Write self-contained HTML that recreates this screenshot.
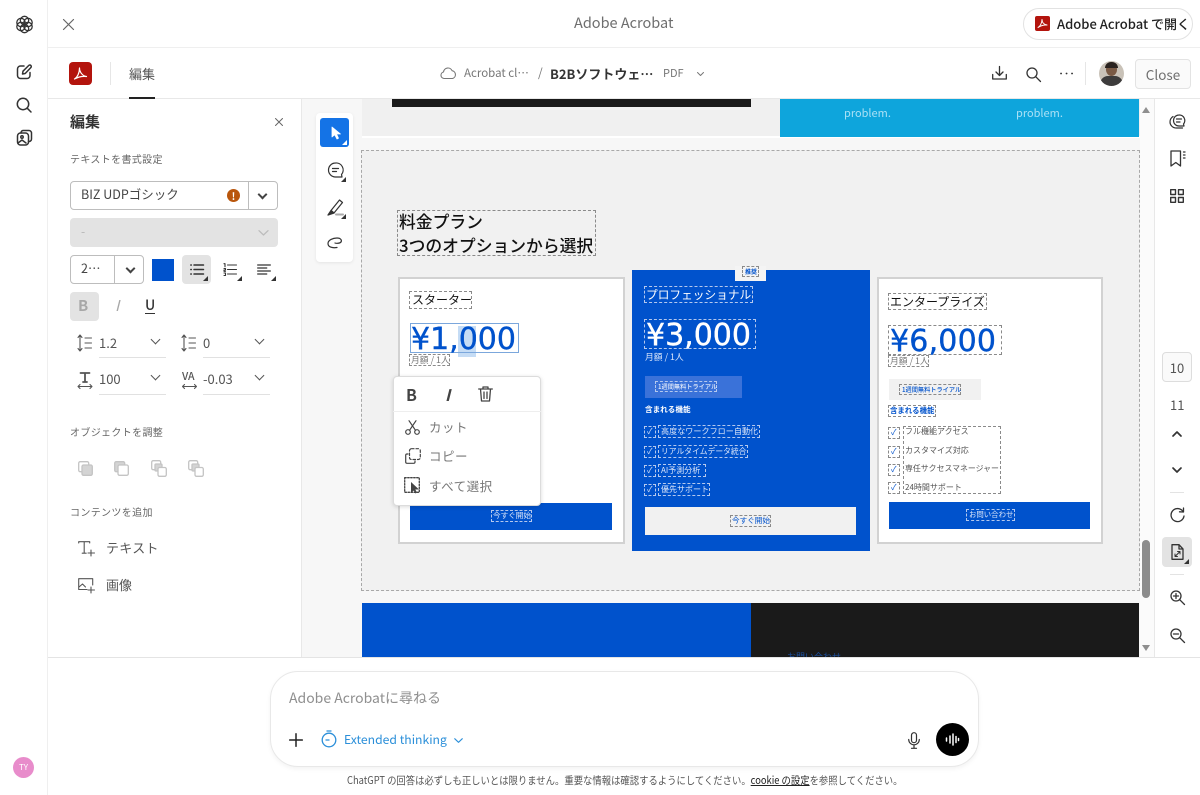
<!DOCTYPE html>
<html lang="ja"><head><meta charset="utf-8"><title>Adobe Acrobat</title>
<style>
*{box-sizing:border-box}
html,body{margin:0;padding:0;width:1200px;height:795px;overflow:hidden;background:#fff;font-family:"Noto Sans CJK JP","Liberation Sans",sans-serif;color:#2c2c2c}
.a{position:absolute}
.t{position:absolute;white-space:nowrap;line-height:1}
.d{position:absolute;border:1px dashed #8a8a8a;white-space:nowrap;line-height:1}
.dw{border-color:#b4c8ee}
.p{font-family:"DejaVu Sans","Liberation Sans",sans-serif;font-size:30px;-webkit-text-stroke:.4px currentColor}
svg{position:absolute;overflow:visible;stroke-linecap:round;stroke-linejoin:round}
svg:not([fill]){fill:none}
svg:not([stroke]){stroke:#333}
svg:not([stroke-width]){stroke-width:1.5}
.tri{position:absolute;width:0;height:0;border-left:5px solid transparent;border-bottom:5px solid #333}
.sel{position:absolute;border:1px solid #bdbdbd;border-radius:4px;background:#fff}
.ul{position:absolute;height:1px;background:#e1e1e1}
.chev{position:absolute;width:7px;height:7px;border-right:2px solid #444;border-bottom:2px solid #444;transform:rotate(45deg)}
</style></head><body>

<!-- rail -->
<div class="a" style="left:47px;top:0;width:1px;height:795px;background:#efefef"></div>
<svg style="left:14px;top:14px" width="21" height="21" viewBox="0 0 21 21" stroke-width="1.3"><circle cx="10.5" cy="6.5" r="4.2"/><circle cx="14" cy="8.500" r="4.2"/><circle cx="14" cy="12.500" r="4.2"/><circle cx="10.5" cy="14.500" r="4.2"/><circle cx="7" cy="12.500" r="4.2"/><circle cx="7" cy="8.500" r="4.2"/></svg>
<svg style="left:16px;top:64px" width="17" height="16" viewBox="0 0 17 16"><path d="M8 2H4.500A3 3 0 0 0 1.500 5v6.500a3 3 0 0 0 3 3H11a3 3 0 0 0 3-3V8.500"/><path d="M6.500 10l.5-2.800L12.700 1.500a1.400 1.400 0 0 1 2.200 2L9.200 9.500z"/></svg>
<svg style="left:16px;top:97px" width="16" height="16" viewBox="0 0 16 16"><circle cx="7" cy="7" r="5.700"/><path d="M11.200 11.200L15 15"/></svg>
<svg style="left:16px;top:129px" width="17" height="17" viewBox="0 0 17 17"><rect x="1.500" y="4" width="11" height="12" rx="3"/><path d="M5 4V3.500a2.500 2.500 0 0 1 2.500-2H13a2.500 2.500 0 0 1 2.500 2.500v6a2.500 2.500 0 0 1-3 2.500"/><circle cx="6" cy="8" r="1.200"/><path d="M2 14l4-3 4 3"/></svg>
<div class="a" style="left:13px;top:757px;width:21px;height:21px;border-radius:50%;background:#e88ccb;color:#fff;font-size:8px;line-height:21px;text-align:center">TY</div>

<!-- header -->
<div class="a" style="left:48px;top:47px;width:1152px;height:1px;background:#efefef"></div>
<svg style="left:63px;top:19px" width="11" height="11" viewBox="0 0 11 11" stroke="#666" stroke-width="1.200"><path d="M.5.500l10 10M10.500.500l-10 10"/></svg>
<div class="t" style="left:574px;top:16px;font-size:14.500px;color:#6e6e6e">Adobe Acrobat</div>
<div class="a" style="left:1023px;top:8px;width:170px;height:32px;border:1px solid #e2e2e2;border-radius:16px"></div>
<div class="a" style="left:1035px;top:16px;width:15px;height:15px;border-radius:2px;background:#b3140d"></div>
<svg style="left:1037px;top:18px" width="11" height="11" viewBox="0 0 11 11" stroke="#fff" stroke-width="1"><path d="M1 9.500C3 8.500 5 5 5 1.500c0 3 2 5 5 5.500-3-.3-6 .5-9 2.500z"/></svg>
<div class="t" style="left:1057px;top:17px;font-size:13px;font-weight:500;color:#222">Adobe Acrobat で開く</div>

<!-- toolbar -->
<div class="a" style="left:48px;top:98px;width:1152px;height:1px;background:#e8e8e8"></div>
<div class="a" style="left:69px;top:62px;width:23px;height:23px;border-radius:4px;background:#b3140d"></div>
<svg style="left:73px;top:66px" width="15" height="15" viewBox="0 0 15 15" stroke="#fff" stroke-width="1.200"><path d="M1.500 13c2.500-1.500 5-5.500 5-11 0 4 3 8 7 8.500-4-.5-8 .3-12 2.500z"/></svg>
<div class="a" style="left:110px;top:62px;width:1px;height:23px;background:#e6e6e6"></div>
<div class="t" style="left:129px;top:67px;font-size:13px;color:#555">編集</div>
<div class="a" style="left:129px;top:97px;width:26px;height:2px;background:#222"></div>
<svg style="left:440px;top:66px" width="17" height="13" viewBox="0 0 17 13" stroke="#777" stroke-width="1.100"><path d="M4 12.500a3.300 3.300 0 0 1-.5-6.500 4.500 4.500 0 0 1 8.600-1.300A4 4 0 0 1 12.500 12.500z"/></svg>
<div class="t" style="left:464px;top:68px;font-size:11.500px;color:#777">Acrobat cl⋯</div>
<div class="t" style="left:538px;top:67px;font-size:12px;color:#777">/</div>
<div class="t" style="left:550px;top:67px;font-size:13px;font-weight:700;color:#333">B2Bソフトウェ⋯</div>
<div class="t" style="left:663px;top:68px;font-size:11px;color:#777">PDF</div>
<svg style="left:697px;top:72px" width="7" height="4" viewBox="0 0 7 4" stroke="#777" stroke-width="1"><path d="M.5.500L3.500 3.500 6.500.500"/></svg>
<svg style="left:992px;top:66px" width="15" height="14" viewBox="0 0 15 14" stroke-width="1.300"><path d="M7.500.500v8.500M4 6l3.500 3.500L11 6M.700 8.500v4.500h13.600V8.500"/></svg>
<svg style="left:1026px;top:67px" width="15" height="15" viewBox="0 0 15 15" stroke-width="1.300"><circle cx="6" cy="6" r="5"/><path d="M9.700 9.700L14.500 14.500"/></svg>
<svg style="left:1060px;top:72px" width="13" height="3" viewBox="0 0 13 3" stroke-width="1.800"><path d="M1 1.500h.1M6.500 1.500h.1M12 1.500h.1"/></svg>
<div class="a" style="left:1085px;top:62px;width:1px;height:23px;background:#e6e6e6"></div>
<div class="a" style="left:1099px;top:61px;width:25px;height:25px;border-radius:50%;overflow:hidden;background:#c9c2b8">
<div class="a" style="left:7px;top:2px;width:11px;height:13px;border-radius:50%;background:#7a5a45"></div>
<div class="a" style="left:6px;top:1px;width:13px;height:6px;border-radius:6px 6px 0 0;background:#2a2320"></div>
<div class="a" style="left:1px;top:15px;width:23px;height:12px;border-radius:8px 8px 0 0;background:#3d3c3c"></div></div>
<div class="a" style="left:1135px;top:59px;width:56px;height:30px;border:1px solid #e3e3e3;border-radius:4px;background:#fafafa;color:#6e6e6e;font-size:13.500px;line-height:28px;text-align:center">Close</div>

<!-- left panel -->
<div class="a" style="left:301px;top:99px;width:1px;height:558px;background:#e8e8e8"></div>
<div class="t" style="left:70px;top:114px;font-size:15px;font-weight:700;color:#333">編集</div>
<svg style="left:275px;top:118px" width="8" height="8" viewBox="0 0 8 8" stroke="#666" stroke-width="1"><path d="M.5.500l7 7M7.500.500l-7 7"/></svg>
<div class="t" style="left:70px;top:154px;font-size:10px;letter-spacing:.35px;color:#666">テキストを書式設定</div>
<div class="sel" style="left:70px;top:181px;width:208px;height:29px"></div>
<div class="a" style="left:248px;top:181px;width:1px;height:29px;background:#bdbdbd"></div>
<div class="t" style="left:81px;top:188px;font-size:12.500px;color:#444">BIZ UDPゴシック</div>
<div class="a" style="left:227px;top:189px;width:13px;height:13px;border-radius:50%;background:#b9560c;color:#fff;font-size:10px;line-height:13px;text-align:center;font-weight:700">!</div>
<div class="chev" style="left:259px;top:191px"></div>
<div class="a" style="left:70px;top:218px;width:208px;height:29px;border-radius:4px;background:#e3e3e3"></div>
<div class="t" style="left:81px;top:226px;font-size:12px;color:#b5b5b5">-</div>
<svg style="left:258px;top:230px" width="11" height="6" viewBox="0 0 11 6" stroke="#bcbcbc" stroke-width="1.300"><path d="M1 .7L5.500 5 10 .7"/></svg>
<div class="sel" style="left:70px;top:255px;width:74px;height:29px"></div>
<div class="a" style="left:114px;top:255px;width:1px;height:29px;background:#bdbdbd"></div>
<div class="t" style="left:81px;top:262px;font-size:12.500px;color:#444">2⋯</div>
<div class="chev" style="left:127px;top:265px"></div>
<div class="a" style="left:152px;top:259px;width:22px;height:22px;background:#0052cc"></div>
<div class="a" style="left:182px;top:255px;width:29px;height:29px;border-radius:4px;background:#e3e3e3"></div>
<svg style="left:190px;top:264px" width="14" height="11" viewBox="0 0 14 11" stroke-width="1.500"><path d="M4 1h9.500M4 5.500h9.500M4 10h9.500M.8 1h.5M.8 5.500h.5M.8 10h.5"/></svg>
<div class="tri" style="left:203px;top:276px"></div>
<svg style="left:223px;top:263px" width="14" height="13" viewBox="0 0 14 13" stroke-width="1.100"><path d="M4.500 2h9M4.500 6.500h9M4.500 11h9M1 .7h1v3M1 5.500h1.500v1.500H1v1.300h1.500M1 10h1.500v2.500H1"/></svg>
<div class="tri" style="left:237px;top:276px"></div>
<svg style="left:257px;top:264px" width="14" height="11" viewBox="0 0 14 11" stroke-width="1.300"><path d="M.7 1h12.600M.7 4h9M.7 7h12.600M.7 10h9"/></svg>
<div class="tri" style="left:271px;top:276px"></div>
<div class="a" style="left:70px;top:292px;width:29px;height:29px;border-radius:4px;background:#e3e3e3"></div>
<div class="t" style="left:78px;top:298px;font-size:15px;font-weight:700;color:#a8a8a8">B</div>
<div class="t" style="left:115px;top:298px;font-size:15px;font-style:italic;color:#a8a8a8">I</div>
<div class="t" style="left:145px;top:298px;font-size:14px;color:#333;font-weight:500;border-bottom:1.500px solid #333;padding-bottom:0;height:16px">U</div>

<svg style="left:77px;top:334px" width="15" height="18" viewBox="0 0 15 18" stroke="#555" stroke-width="1.100"><path d="M3 1v16M1 3.500L3 1l2 2.500M1 14.500L3 17l2-2.500M8 4h6.500M8 9h6.500M8 14h6.500"/></svg>
<div class="t" style="left:99px;top:336px;font-size:13px;color:#555">1.2</div>
<div class="a" style="left:152px;top:336px;width:7px;height:7px;border-right:1.500px solid #555;border-bottom:1.500px solid #555;transform:rotate(45deg)"></div>
<div class="ul" style="left:99px;top:357px;width:67px"></div>
<svg style="left:181px;top:334px" width="15" height="18" viewBox="0 0 15 18" stroke="#555" stroke-width="1.100"><path d="M3 1v16M1 3.500L3 1l2 2.500M1 14.500L3 17l2-2.500M8 4h6.500M8 9h6.500M8 14h6.500"/></svg>
<div class="t" style="left:203px;top:336px;font-size:13px;color:#555">0</div>
<div class="a" style="left:256px;top:336px;width:7px;height:7px;border-right:1.500px solid #555;border-bottom:1.500px solid #555;transform:rotate(45deg)"></div>
<div class="ul" style="left:203px;top:357px;width:67px"></div>

<svg style="left:77px;top:372px" width="16" height="17" viewBox="0 0 16 17" stroke="#555" stroke-width="1.100"><path d="M3.500 1h9M8 1v9M6 10h4" stroke-width="1.800"/><path d="M1 14.500h14M3 12.500l-2 2 2 2M13 12.500l2 2-2 2"/></svg>
<div class="t" style="left:99px;top:372px;font-size:13px;color:#555">100</div>
<div class="a" style="left:152px;top:372px;width:7px;height:7px;border-right:1.500px solid #555;border-bottom:1.500px solid #555;transform:rotate(45deg)"></div>
<div class="ul" style="left:99px;top:394px;width:67px"></div>
<div class="t" style="left:182px;top:372px;font-size:10.500px;color:#555;font-weight:500">VA</div>
<svg style="left:182px;top:384px" width="15" height="5" viewBox="0 0 15 5" stroke="#555" stroke-width="1.100"><path d="M.5 2.500h14M2.500.5l-2 2 2 2M12.500.5l2 2-2 2"/></svg>
<div class="t" style="left:203px;top:372px;font-size:13px;color:#555">-0.03</div>
<div class="a" style="left:256px;top:372px;width:7px;height:7px;border-right:1.500px solid #555;border-bottom:1.500px solid #555;transform:rotate(45deg)"></div>
<div class="ul" style="left:203px;top:394px;width:67px"></div>

<div class="t" style="left:70px;top:427px;font-size:10px;letter-spacing:.35px;color:#666">オブジェクトを調整</div>
<svg style="left:78px;top:461px" width="15" height="15" viewBox="0 0 15 15" stroke="#c4c4c4" stroke-width="1.300"><rect x=".7" y=".7" width="10" height="10" rx="1.500"/><rect x="4" y="4" width="10.300" height="10.300" rx="1.500" fill="#d4d4d4"/></svg>
<svg style="left:114px;top:461px" width="15" height="15" viewBox="0 0 15 15" stroke="#c4c4c4" stroke-width="1.300"><rect x=".7" y=".7" width="10" height="10" rx="1.500" fill="#d4d4d4"/><rect x="4" y="4" width="10.300" height="10.300" rx="1.500" fill="#fff"/></svg>
<svg style="left:151px;top:460px" width="16" height="17" viewBox="0 0 16 17" stroke="#c4c4c4" stroke-width="1.300"><rect x=".7" y=".7" width="9" height="9" rx="1.500"/><rect x="4" y="4" width="7" height="7" rx="1" fill="#d4d4d4"/><rect x="7" y="7.500" width="8.300" height="8.800" rx="1.500" fill="#fff"/></svg>
<svg style="left:188px;top:460px" width="16" height="17" viewBox="0 0 16 17" stroke="#c4c4c4" stroke-width="1.300"><rect x=".7" y=".7" width="9" height="9" rx="1.500"/><rect x="4" y="4" width="7" height="7" rx="1" fill="#d4d4d4"/><rect x="7" y="7.500" width="8.300" height="8.800" rx="1.500" fill="#fff"/></svg>
<div class="t" style="left:70px;top:507px;font-size:10px;letter-spacing:.35px;color:#666">コンテンツを追加</div>
<svg style="left:78px;top:541px" width="17" height="16" viewBox="0 0 17 16" stroke="#555" stroke-width="1.100"><path d="M.7 2V.7h11V2M6.200.7v11.500M4.200 12.200h4M13 9v6M10 12h6.500"/></svg>
<div class="t" style="left:106px;top:541px;font-size:13px;letter-spacing:.3px;color:#555">テキスト</div>
<svg style="left:78px;top:578px" width="17" height="16" viewBox="0 0 17 16" stroke="#555" stroke-width="1.100"><path d="M9 11.500H.7V.7h14V7M1 9l3.500-3 3 3M13 9v6M10 12h6.500"/></svg>
<div class="t" style="left:106px;top:578px;font-size:13px;color:#555">画像</div>

<!-- doc background -->
<div class="a" style="left:302px;top:99px;width:852px;height:558px;background:#f7f7f7;overflow:hidden">
 <div class="a" style="left:60px;top:0;width:778px;height:37px;background:#f0f0f0"></div>
 <div class="a" style="left:60px;top:37px;width:778px;height:2px;background:#fff"></div>
 <div class="a" style="left:90px;top:0;width:359px;height:8px;background:#1a1a1a"></div>
 <div class="a" style="left:478px;top:0;width:359px;height:38px;background:#0ea5dc"></div>
 <div class="t" style="left:542px;top:9px;font-size:11px;color:#a9e0f5">problem.</div>
 <div class="t" style="left:714px;top:9px;font-size:11px;color:#a9e0f5">problem.</div>
 <div class="a" style="left:60px;top:504px;width:389px;height:54px;background:#0052cc"></div>
 <div class="a" style="left:449px;top:504px;width:388px;height:54px;background:#1a1a1a"></div>
 <div class="t" style="left:485px;top:553px;font-size:9px;color:#1c4f9e">お問い合わせ</div>
 <!-- scrollbar -->
 <div class="a" style="left:838px;top:0;width:14px;height:558px;background:#fbfbfb"></div>
 <div class="a" style="left:840px;top:441px;width:8px;height:58px;border-radius:4px;background:#8c8c8c"></div>
 <div class="a" style="left:840px;top:8px;width:0;height:0;border-left:4.500px solid transparent;border-right:4.500px solid transparent;border-bottom:6px solid #8f8f8f"></div>
 <div class="a" style="left:840px;top:546px;width:0;height:0;border-left:4.500px solid transparent;border-right:4.500px solid transparent;border-top:6px solid #8f8f8f"></div>
</div>

<!-- section -->
<div class="a" style="left:361px;top:150px;width:779px;height:441px;background:#f1f1f1;border:1px dashed #a8a8a8"></div>
<div class="d" style="left:397px;top:210px;width:199px;height:46px"></div>
<div class="t" style="left:399px;top:210px;font-size:16.800px;font-weight:500;line-height:23.500px;color:#111;white-space:pre">料金プラン
3つのオプションから選択</div>

<!-- card 1 -->
<div class="a" style="left:398px;top:277px;width:227px;height:267px;background:#fff;border:2px solid #d2d2d2"></div>
<div class="d" style="left:409px;top:291px;width:63px;height:18px;font-size:12px;line-height:16px;padding-left:2px;color:#111">スターター</div>
<div class="a" style="left:458px;top:326px;width:18px;height:31px;background:#c5dcf5"></div>
<div class="a" style="left:410px;top:323px;width:109px;height:30px;border:1px solid #7ba7dc"></div>
<div class="t p" style="left:411px;top:323px;line-height:34px;color:#0052cc">¥1,000</div>
<div class="d" style="left:409px;top:354px;width:41px;height:12px;font-size:8.800px;line-height:10px;color:#777;padding-left:1px">月額 / 1人</div>
<div class="a" style="left:410px;top:503px;width:202px;height:27px;background:#0052cc"></div>
<div class="d dw" style="left:491px;top:510px;width:41px;height:12px;font-size:7.600px;line-height:10px;color:#dbe6fa;padding-left:1px">今すぐ開始</div>

<!-- card 2 -->
<div class="a" style="left:632px;top:270px;width:238px;height:281px;background:#0052cc"></div>
<div class="a" style="left:735px;top:266px;width:31px;height:15px;background:#f4f4f4"></div>
<div class="d" style="left:742px;top:266px;width:17px;height:11px;font-size:6px;line-height:9px;color:#0052cc;padding-left:2px;font-weight:700">推奨</div>
<div class="d dw" style="left:644px;top:286px;width:109px;height:17px;font-size:11.700px;line-height:15px;color:#fff;padding-left:1px">プロフェッショナル</div>
<div class="d dw p" style="left:644px;top:319px;width:112px;height:30px;line-height:32px;color:#fff;padding-left:1px">¥3,000</div>
<div class="t" style="left:645px;top:353px;font-size:8.800px;color:#dbe6fa">月額 / 1人</div>
<div class="a" style="left:645px;top:376px;width:97px;height:22px;background:#3a72d9"></div>
<div class="d dw" style="left:655px;top:381px;width:62px;height:11px;font-size:6.200px;line-height:9px;color:#e8effc;padding-left:2px;font-weight:500">1週間無料トライアル</div>
<div class="t" style="left:645px;top:406px;font-size:7.600px;color:#fff;font-weight:700">含まれる機能</div>
<div class="d dw" style="left:644px;top:426px;width:12px;height:12px;font-size:8px;line-height:10px;color:#dbe6fa;padding-left:2px">✓</div>
<div class="d dw" style="left:658px;top:425px;width:102px;height:13px;font-size:8.100px;line-height:11px;color:#dbe6fa;padding-left:2px">高度なワークフロー自動化</div>
<div class="d dw" style="left:644px;top:446px;width:12px;height:12px;font-size:8px;line-height:10px;color:#dbe6fa;padding-left:2px">✓</div>
<div class="d dw" style="left:658px;top:445px;width:90px;height:13px;font-size:7.800px;line-height:11px;color:#dbe6fa;padding-left:2px">リアルタイムデータ統合</div>
<div class="d dw" style="left:644px;top:465px;width:12px;height:12px;font-size:8px;line-height:10px;color:#dbe6fa;padding-left:2px">✓</div>
<div class="d dw" style="left:658px;top:464px;width:48px;height:13px;font-size:8px;line-height:11px;color:#dbe6fa;padding-left:2px">AI予測分析</div>
<div class="d dw" style="left:644px;top:484px;width:12px;height:12px;font-size:8px;line-height:10px;color:#dbe6fa;padding-left:2px">✓</div>
<div class="d dw" style="left:658px;top:483px;width:52px;height:13px;font-size:8px;line-height:11px;color:#dbe6fa;padding-left:2px">優先サポート</div>
<div class="a" style="left:645px;top:507px;width:211px;height:28px;background:#f1f1f1"></div>
<div class="d" style="left:730px;top:515px;width:41px;height:12px;font-size:7.600px;line-height:10px;color:#0052cc;padding-left:1px">今すぐ開始</div>

<!-- card 3 -->
<div class="a" style="left:877px;top:277px;width:226px;height:267px;background:#fff;border:2px solid #d2d2d2"></div>
<div class="d" style="left:888px;top:293px;width:99px;height:17px;font-size:12px;line-height:15px;color:#111;padding-left:1px">エンタープライズ</div>
<div class="d p" style="left:888px;top:325px;width:114px;height:30px;line-height:32px;color:#0052cc;padding-left:1px;letter-spacing:.2px">¥6,000</div>
<div class="d" style="left:888px;top:355px;width:41px;height:12px;font-size:8.800px;line-height:10px;color:#777;padding-left:1px">月額 / 1人</div>
<div class="a" style="left:889px;top:379px;width:92px;height:21px;background:#f1f1f1"></div>
<div class="d" style="left:899px;top:384px;width:62px;height:11px;font-size:6.200px;line-height:9px;color:#0052cc;padding-left:2px;font-weight:500">1週間無料トライアル</div>
<div class="d" style="left:888px;top:405px;width:48px;height:12px;font-size:7.400px;line-height:10px;color:#0052cc;font-weight:700;padding-left:1px">含まれる機能</div>
<div class="d" style="left:888px;top:427px;width:12px;height:12px;font-size:8px;line-height:10px;color:#0052cc;padding-left:2px">✓</div>
<div class="d" style="left:888px;top:446px;width:12px;height:12px;font-size:8px;line-height:10px;color:#0052cc;padding-left:2px">✓</div>
<div class="d" style="left:888px;top:464px;width:12px;height:12px;font-size:8px;line-height:10px;color:#0052cc;padding-left:2px">✓</div>
<div class="d" style="left:888px;top:482px;width:12px;height:12px;font-size:8px;line-height:10px;color:#0052cc;padding-left:2px">✓</div>
<div class="d" style="left:903px;top:426px;width:98px;height:68px"></div>
<div class="t" style="left:905px;top:428px;font-size:8px;color:#555">フル機能アクセス</div>
<div class="t" style="left:905px;top:447px;font-size:8px;color:#555">カスタマイズ対応</div>
<div class="t" style="left:905px;top:465px;font-size:7.900px;color:#555">専任サクセスマネージャー</div>
<div class="t" style="left:905px;top:484px;font-size:8px;color:#555">24時間サポート</div>
<div class="a" style="left:889px;top:502px;width:201px;height:27px;background:#0052cc"></div>
<div class="d dw" style="left:966px;top:509px;width:49px;height:12px;font-size:7.400px;line-height:10px;color:#dbe6fa;padding-left:2px">お問い合わせ</div>

<!-- tools -->
<div class="a" style="left:316px;top:113px;width:37px;height:149px;background:#fff;border-radius:4px;box-shadow:0 1px 3px rgba(0,0,0,.08)"></div>
<div class="a" style="left:320px;top:118px;width:29px;height:29px;border-radius:3px;background:#1473e6"></div>
<svg style="left:331px;top:126px" width="11" height="14" viewBox="0 0 11 14" fill="#fff" stroke="#fff" stroke-width=".8"><path d="M1 1v10l2.700-2.300L6 13l1.500-.8L5.500 8H9.500z"/></svg>
<div class="tri" style="left:342px;top:140px;border-bottom-color:#fff"></div>
<svg style="left:327px;top:162px" width="17" height="17" viewBox="0 0 17 17" stroke-width="1.200"><path d="M8.500 1a7 7 0 1 0 0 14h6.500l-.5-2.500A7 7 0 0 0 8.500 1z"/><path d="M5.500 6.500h6M5.500 9.500h4"/></svg>
<div class="tri" style="left:341px;top:177px"></div>
<svg style="left:327px;top:198px" width="18" height="18" viewBox="0 0 18 18" stroke-width="1.200"><path d="M4 12.500L12.500 2l3 2.500L7 15z"/><path d="M1 17l3-4.500L7 15z" fill="#333"/><path d="M9 16.500h7" stroke="#aaa" stroke-width="2"/></svg>
<div class="tri" style="left:341px;top:214px"></div>
<svg style="left:327px;top:237px" width="16" height="12" viewBox="0 0 16 12" stroke-width="1.200"><path d="M10 10.500c-5 .8-9-.5-9-4s5-5.500 9-5.500 5 2.500 4 4-5 1.500-6 1"/></svg>

<!-- context menu -->
<div class="a" style="left:393px;top:376px;width:148px;height:130px;background:#fff;border:1px solid #dcdcdc;border-radius:4px;box-shadow:0 1px 4px rgba(0,0,0,.15)"></div>
<div class="a" style="left:393px;top:411px;width:148px;height:1px;background:#eee"></div>
<div class="t" style="left:406px;top:386px;font-size:16px;font-weight:700;color:#444">B</div>
<div class="t" style="left:445px;top:386px;font-size:16px;font-weight:700;font-style:italic;color:#444">I</div>
<svg style="left:478px;top:386px" width="15" height="16" viewBox="0 0 15 16" stroke="#444" stroke-width="1.300"><path d="M.7 3h13.600M5 3V1h5v2M2.500 3l1 12h8l1-12M6 6v6.500M9 6v6.500"/></svg>
<svg style="left:405px;top:420px" width="15" height="15" viewBox="0 0 15 15" stroke="#444" stroke-width="1.200"><circle cx="3" cy="12" r="2.300"/><circle cx="12" cy="12" r="2.300"/><path d="M4.500 10.300L11 .7M10.500 10.300L4 .7"/></svg>
<div class="t" style="left:429px;top:421px;font-size:12.500px;letter-spacing:.5px;color:#777">カット</div>
<svg style="left:405px;top:448px" width="16" height="16" viewBox="0 0 16 16" stroke="#444" stroke-width="1.200"><path d="M3 6H2a1.300 1.300 0 0 0-1.300 1.300V14A1.300 1.300 0 0 0 2 15.300h6.700A1.300 1.300 0 0 0 10 14v-1"/><rect x="4.500" y=".7" width="10.800" height="10.800" rx="2" stroke-dasharray="2.500 2"/></svg>
<div class="t" style="left:429px;top:450px;font-size:12.500px;letter-spacing:.5px;color:#777">コピー</div>
<svg style="left:404px;top:477px" width="17" height="17" viewBox="0 0 17 17" stroke="#444" stroke-width="1.300"><rect x=".7" y=".7" width="14.600" height="14.600" stroke-dasharray="1.500 1.500"/><path d="M7 5v11l2.700-2.500 1.800 3 1.500-1-1.700-3H15z" fill="#444" stroke="none"/></svg>
<div class="t" style="left:429px;top:480px;font-size:12.500px;letter-spacing:.5px;color:#777">すべて選択</div>

<!-- right panel -->
<div class="a" style="left:1154px;top:99px;width:1px;height:558px;background:#e8e8e8"></div>
<svg style="left:1169px;top:114px" width="16" height="15" viewBox="0 0 16 15" stroke-width="1.200"><path d="M4 2.500A6.500 6.500 0 0 0 1 8c0 3 2.500 6 6.500 6h6"/><path d="M10 1a5.500 5.500 0 1 0 0 11h5l-.5-2A5.500 5.500 0 0 0 10 1z"/><path d="M7.500 5h5M7.500 8h3.500"/></svg>
<svg style="left:1170px;top:150px" width="16" height="17" viewBox="0 0 16 17" stroke-width="1.300"><path d="M1 1h9.500v15l-4.700-3.500L1 16zM13.500 2h1.500M13.500 5h1.500M13.500 8h1.500"/></svg>
<svg style="left:1170px;top:189px" width="14" height="14" viewBox="0 0 14 14" stroke-width="1.400"><rect x=".7" y=".7" width="4.800" height="4.800"/><rect x="8.500" y=".7" width="4.800" height="4.800"/><rect x=".7" y="8.500" width="4.800" height="4.800"/><rect x="8.500" y="8.500" width="4.800" height="4.800"/></svg>
<div class="a" style="left:1162px;top:352px;width:30px;height:30px;border:1px solid #ddd;border-radius:4px;background:#fafafa;font-size:13px;line-height:29px;text-align:center;color:#555">10</div>
<div class="t" style="left:1170px;top:398px;font-size:13px;color:#555">11</div>
<svg style="left:1172px;top:431px" width="10" height="6" viewBox="0 0 10 6" stroke-width="1.700"><path d="M1 5l4-4 4 4"/></svg>
<svg style="left:1172px;top:467px" width="10" height="6" viewBox="0 0 10 6" stroke-width="1.700"><path d="M1 1l4 4 4-4"/></svg>
<div class="a" style="left:1170px;top:492px;width:14px;height:1px;background:#e3e3e3"></div>
<svg style="left:1170px;top:508px" width="15" height="15" viewBox="0 0 15 15" stroke-width="1.300"><path d="M13 3.500A6.500 6.500 0 1 0 14 8"/><path d="M9.500 3.800L13.500 4 13.500 0"/></svg>
<div class="a" style="left:1162px;top:537px;width:30px;height:30px;border-radius:4px;background:#e3e3e3"></div>
<svg style="left:1171px;top:544px" width="13" height="16" viewBox="0 0 13 16" stroke-width="1.300"><path d="M8 .7H1v14.600h11V5zM8 .7V5h4"/><path d="M4 10v2.500h2.500M4 12.500l5-5M6.500 7.500H9V10" stroke-width="1"/></svg>
<div class="tri" style="left:1184px;top:559px"></div>
<div class="a" style="left:1170px;top:574px;width:14px;height:1px;background:#e3e3e3"></div>
<svg style="left:1170px;top:590px" width="15" height="15" viewBox="0 0 15 15" stroke-width="1.300"><circle cx="6" cy="6" r="5"/><path d="M9.700 9.700L14.500 14.500M3.500 6h5M6 3.500v5"/></svg>
<svg style="left:1170px;top:628px" width="15" height="15" viewBox="0 0 15 15" stroke-width="1.300"><circle cx="6" cy="6" r="5"/><path d="M9.700 9.700L14.500 14.500M3.500 6h5"/></svg>

<!-- bottom -->
<div class="a" style="left:48px;top:657px;width:1152px;height:1px;background:#e4e4e4"></div>
<div class="a" style="left:270px;top:671px;width:709px;height:96px;border:1px solid #e8e8e8;border-radius:28px;background:#fff;box-shadow:0 2px 5px rgba(0,0,0,.05)"></div>
<div class="t" style="left:289px;top:691px;font-size:14px;color:#8f8f8f">Adobe Acrobatに尋ねる</div>
<svg style="left:289px;top:733px" width="14" height="14" viewBox="0 0 14 14" stroke="#222" stroke-width="1.500"><path d="M7 .7v12.600M.7 7h12.600"/></svg>
<svg style="left:321px;top:730px" width="16" height="18" viewBox="0 0 16 18" stroke="#2b8fd9" stroke-width="1.300"><circle cx="8" cy="10" r="6.800"/><path d="M6 1h4M5 10h3"/></svg>
<div class="t" style="left:344px;top:733px;font-size:12.200px;color:#2b8fd9">Extended thinking</div>
<svg style="left:454px;top:738px" width="9" height="5" viewBox="0 0 9 5" stroke="#2b8fd9" stroke-width="1.100"><path d="M.7.700L4.500 4.300 8.300.700"/></svg>
<svg style="left:908px;top:732px" width="12" height="17" viewBox="0 0 12 17" stroke="#333" stroke-width="1.200"><rect x="3.500" y=".7" width="5" height="10" rx="2.500"/><path d="M.7 7.500a5.300 5.300 0 0 0 10.600 0M6 13v3.300M3.500 16.300h5"/></svg>
<div class="a" style="left:936px;top:723px;width:33px;height:33px;border-radius:50%;background:#000"></div>
<svg style="left:945px;top:733px" width="15" height="13" viewBox="0 0 15 13" stroke="#fff" stroke-width="1.500"><path d="M1.500 5v3M5 3v7M8 1v11M11 3.500v6M13.500 5.500v2"/></svg>
<div class="t" style="left:347px;top:776px;font-size:10.500px;color:#555;transform:scaleX(.89);transform-origin:left top">ChatGPT の回答は必ずしも正しいとは限りません。重要な情報は確認するようにしてください。<span style="color:#222;text-decoration:underline">cookie の設定</span>を参照してください。</div>

</body></html>
